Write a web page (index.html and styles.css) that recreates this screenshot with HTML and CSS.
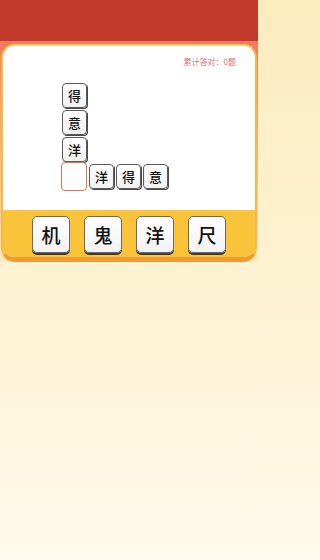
FILE: index.html
```html
<!DOCTYPE html>
<html lang="zh">
<head>
<meta charset="utf-8">
<title>成语填字</title>
<link rel="stylesheet" href="styles.css">
</head>
<body>
<header class="topbar"></header>
<main class="page">
  <section class="card">
    <div class="board">
      <div class="score">累计答对：0题</div>
      <div class="grid">
        <div class="cell" style="grid-column:1;grid-row:1">得</div>
        <div class="cell" style="grid-column:1;grid-row:2">意</div>
        <div class="cell" style="grid-column:1;grid-row:3">洋</div>
        <div class="cell blank" style="grid-column:1;grid-row:4"></div>
        <div class="cell" style="grid-column:2;grid-row:4">洋</div>
        <div class="cell" style="grid-column:3;grid-row:4">得</div>
        <div class="cell" style="grid-column:4;grid-row:4">意</div>
      </div>
    </div>
    <div class="options">
      <div class="opt">机</div>
      <div class="opt">鬼</div>
      <div class="opt">洋</div>
      <div class="opt">尺</div>
    </div>
  </section>
</main>
</body>
</html>
```
FILE: styles.css
```css
html, body {
  margin: 0;
  padding: 0;
}
body {
  width: 258px;
  min-height: 560px;
  font-family: "Noto Sans CJK SC", "Noto Sans", sans-serif;
  background: linear-gradient(180deg, #fcecbe 0%, #fdf3d6 60%, #fffaeb 100%);
}
.topbar {
  height: 41px;
  background: #c23a2b;
}
.page {
  padding: 3px 1px 0 1px;
  background: linear-gradient(180deg, #f07a5c 0px, #f49a6c 60px, #f9cf9a 160px, #fcecbe 225px);
}
.card {
  border: 2px solid #f8cf68;
  border-bottom: 5px solid #ee9b33;
  border-left-color: #f4b84c;
  border-right-color: #f4b84c;
  border-radius: 14px;
  overflow: hidden;
  background: #fff;
}
.board {
  background: #fff;
  height: 164px;
  box-sizing: border-box;
  padding: 10px 19px 0 59px;
}
.score {
  text-align: right;
  font-size: 8px;
  line-height: 12px;
  color: #d8707a;
}
.grid {
  margin-top: 15px;
  display: grid;
  grid-template-columns: repeat(4, 25px);
  grid-template-rows: repeat(4, 25px);
  gap: 2px;
}
.cell {
  box-sizing: border-box;
  border: 1px solid #5a5a5a;
  border-radius: 4px;
  background: linear-gradient(180deg, #ffffff 0%, #f1f1f1 100%);
  box-shadow: 1px 1px 0 #4a4a4a;
  display: flex;
  align-items: center;
  justify-content: center;
  font-size: 13px;
  font-weight: 500;
  color: #111;
  line-height: 1;
}
.cell.blank {
  border: 1.5px solid #d2784a;
  border-radius: 4px;
  background: #fff;
  box-shadow: none;
  margin: -2px 0 -2px -1px;
}
.options {
  background: #f9c33a;
  height: 47px;
  box-sizing: border-box;
  padding-top: 6px;
  display: flex;
  justify-content: center;
  gap: 14px;
}
.opt {
  box-sizing: border-box;
  width: 38px;
  height: 37px;
  border: 1px solid #6a6a6a;
  border-radius: 5px;
  background: linear-gradient(180deg, #ffffff 0%, #f2f2f2 100%);
  box-shadow: 0 2px 0 #3c3c3c;
  display: flex;
  align-items: center;
  justify-content: center;
  font-size: 19px;
  font-weight: 500;
  color: #111;
  line-height: 1;
}
```
